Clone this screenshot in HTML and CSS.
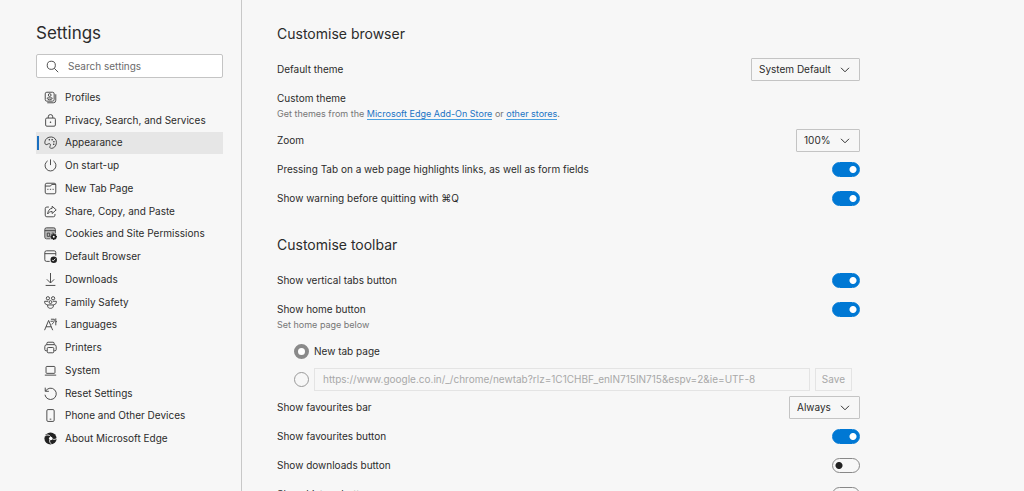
FILE: index.html
```html
<!DOCTYPE html>
<html lang="en-GB">
<head>
    <meta charset="UTF-8">
    <meta name="viewport" content="width=device-width, initial-scale=1.0">
    <title>Settings</title>
    <link rel="stylesheet" href="styles.css">
</head>
<body>
    <div class="layout">
        <aside class="sidebar">
            <h1>Settings</h1>
            <div class="search">
                <svg class="icon" viewBox="0 0 16 16"><circle cx="6.5" cy="6.5" r="5"/><path d="M10.2 10.2 15 15"/></svg>
                <input type="search" placeholder="Search settings" aria-label="Search settings">
            </div>

            <nav class="nav">
                <a href="#profiles">
                    <svg class="icon" viewBox="0 0 16 16"><rect x="1.5" y="1.5" width="11" height="11" rx="2"/><path d="M4 14.5h7.500a3 3 0 0 0 3-3V4"/><circle cx="7" cy="5" r="1.700"/><path d="M4 8.500h6v.7c0 2.200-6 2.200-6 0z"/></svg>
                    Profiles
                </a>
                <a href="#privacy">
                    <svg class="icon" viewBox="0 0 16 16"><rect x="2" y="5" width="12" height="10" rx="1.500"/><path d="M5.200 5V3.500a2.800 2.800 0 0 1 5.600 0V5"/><circle class="solid" cx="8" cy="10" r=".9"/></svg>
                    Privacy, Search, and Services
                </a>
                <a href="#appearance" class="active" aria-current="page">
                    <svg class="icon" viewBox="0 0 16 16"><path d="M1 7.500C1.300 3.500 5 1 9 1.200c4 .2 6.500 3.500 6.300 7-.2 4.300-3.300 7-6 7-2.500 0-2.500-1.600-1.600-3.200.9-1.700-.5-3.300-2.300-2.400L3.600 10.500C2 11.300.8 9.500 1 7.500z"/><circle class="solid" cx="6.500" cy="4.700" r=".9"/><circle class="solid" cx="10" cy="4.500" r=".9"/><circle class="solid" cx="12.200" cy="7" r=".9"/><circle class="solid" cx="12" cy="10.200" r=".9"/></svg>
                    Appearance
                </a>
                <a href="#startup">
                    <svg class="icon" viewBox="0 0 16 16"><path d="M8 .5v7M4.500 2.300a6.700 6.700 0 1 0 7 0"/></svg>
                    On start-up
                </a>
                <a href="#newtab">
                    <svg class="icon" viewBox="0 0 16 16"><rect x="1.500" y="1.500" width="13" height="13" rx="2"/><path d="M1.500 5H8l1.500-2h5M4 9h1.500M7.200 9h1.600M10.500 9H12"/></svg>
                    New Tab Page
                </a>
                <a href="#share">
                    <svg class="icon" viewBox="0 0 16 16"><path d="M6 2.500H3.500a2 2 0 0 0-2 2v8a2 2 0 0 0 2 2h8a2 2 0 0 0 2-2V11M10 1.500 15 6l-5 4.500V8C7.500 8 5.800 9 4.500 11 4.800 7.500 6.500 4.500 10 4z"/></svg>
                    Share, Copy, and Paste
                </a>
                <a href="#cookies">
                    <svg class="icon" viewBox="0 0 16 16"><path class="shade" d="M1.500 1.500h12v12h-12z"/><path d="M8 14.500H3a2 2 0 0 1-2-2V3a2 2 0 0 1 2-2h9a2 2 0 0 1 2 2v5M1 4.500h13M4 7.500h3v4H4zM9.500 7.500H12"/><circle class="solid" cx="12" cy="12" r="3.200"/><path class="cog" d="M12 8v8M8 12h8M9.200 9.200l5.600 5.600M14.800 9.200l-5.600 5.600"/><circle class="hole" cx="12" cy="12" r="1.200"/></svg>
                    Cookies and Site Permissions
                </a>
                <a href="#default">
                    <svg class="icon" viewBox="0 0 16 16"><path d="M7 14H3a2 2 0 0 1-2-2V3a2 2 0 0 1 2-2h9.500a2 2 0 0 1 2 2v4M1 4.500h13.500"/><circle class="solid" cx="12" cy="12" r="4"/><path class="tick" d="m10 12.300 1.300 1.200 2.700-2.900"/></svg>
                    Default Browser
                </a>
                <a href="#downloads">
                    <svg class="icon" viewBox="0 0 16 16"><path d="M8 0v12M3.500 7.800 8 12.300l4.500-4.500M2 15.300h12"/></svg>
                    Downloads
                </a>
                <a href="#family">
                    <svg class="icon" viewBox="0 0 16 16"><circle cx="4.800" cy="2.800" r="2"/><circle cx="11.200" cy="2.800" r="2"/><circle cx="8" cy="7.500" r="1.800"/><path d="M4.500 11H11.500v1.500c0 3.600-7 3.600-7 0zM5 6.500H.8c-.3 2.700 1 4.200 3.500 4.200M11 6.500h4.200c.3 2.700-1 4.200-3.500 4.200"/></svg>
                    Family Safety
                </a>
                <a href="#languages">
                    <svg class="icon" viewBox="0 0 16 16"><path d="M.7 15 5.700 3l5 12M2.500 10.800h6.400M8.500 1.500h4.200c0 3-1 5-3.200 6.300M8 4h3M14.500.5V9M14.500 4.500H16"/></svg>
                    Languages
                </a>
                <a href="#printers">
                    <svg class="icon" viewBox="0 0 16 16"><path d="M3.500 12H2.500A1.500 1.500 0 0 1 1 10.500V7a2.500 2.500 0 0 1 2.500-2.500h9A2.500 2.500 0 0 1 15 7v3.500a1.500 1.500 0 0 1-1.500 1.500h-1M3.500 4.500V3a1.500 1.500 0 0 1 1.500-1.500h6A1.500 1.500 0 0 1 12.500 3v1.500"/><rect x="4" y="8" width="8" height="6.500" rx="1.200"/></svg>
                    Printers
                </a>
                <a href="#system">
                    <svg class="icon" viewBox="0 0 16 16"><rect x="2.500" y="3" width="11" height="8.500" rx="1"/><path d="M1 13.700h14"/></svg>
                    System
                </a>
                <a href="#reset">
                    <svg class="icon" viewBox="0 0 16 16"><path d="M1.500.8v4.500H6M2 5a7 7 0 1 1-.8 4.500"/></svg>
                    Reset Settings
                </a>
                <a href="#phone">
                    <svg class="icon" viewBox="0 0 16 16"><rect x="3.500" y=".7" width="9" height="14.600" rx="1.500"/><path d="M7 12.500h2"/></svg>
                    Phone and Other Devices
                </a>
                <a href="#about">
                    <svg class="icon" viewBox="0 0 16 16"><circle class="solid" cx="8" cy="8" r="7.500"/><circle class="hole" cx="8.300" cy="8" r="2.200"/><path class="swirl" d="M8.300 5.800C6.500 3.200 3.500 3 1 5M10.300 8.500c2 1.200 4 .6 5.500-.8M7 9.800c-.5 2 .5 4 2.500 5.500"/></svg>
                    About Microsoft Edge
                </a>
            </nav>
        </aside>

        <main class="content">
            <section>
                <h2>Customise browser</h2>
                <div class="row">
                    <label for="theme">Default theme</label>
                    <div class="select">
                        <select id="theme"><option>System Default</option></select>
                        <svg class="chevron" viewBox="0 0 10 6"><path d="m1 .8 4 4 4-4"/></svg>
                    </div>
                </div>
                <div class="row with-note">
                    <div>
                        <div>Custom theme</div>
                        <p class="note">Get themes from the <a href="#store">Microsoft Edge Add-On Store</a> or <a href="#stores">other stores</a>.</p>
                    </div>
                </div>
                <div class="row">
                    <label for="zoom">Zoom</label>
                    <div class="select">
                        <select id="zoom"><option>100%</option></select>
                        <svg class="chevron" viewBox="0 0 10 6"><path d="m1 .8 4 4 4-4"/></svg>
                    </div>
                </div>
                <div class="row">
                    <label for="tabFocus">Pressing Tab on a web page highlights links, as well as form fields</label>
                    <input type="checkbox" class="toggle" id="tabFocus" checked>
                </div>
                <div class="row">
                    <label for="quitWarning">Show warning before quitting with ⌘Q</label>
                    <input type="checkbox" class="toggle" id="quitWarning" checked>
                </div>
            </section>

            <section>
                <h2>Customise toolbar</h2>
                <div class="row">
                    <label for="verticalTabs">Show vertical tabs button</label>
                    <input type="checkbox" class="toggle" id="verticalTabs" checked>
                </div>
                <div class="row with-note">
                    <div>
                        <label for="homeButton">Show home button</label>
                        <p class="note">Set home page below</p>
                    </div>
                    <input type="checkbox" class="toggle" id="homeButton" checked>
                </div>
                <div class="option">
                    <input type="radio" name="home" id="homeNewTab" checked>
                    <label for="homeNewTab">New tab page</label>
                </div>
                <div class="option">
                    <input type="radio" name="home" aria-label="Custom home page">
                    <input type="text" class="url" aria-label="Home page address" value="https://www.google.co.in/_/chrome/newtab?rlz=1C1CHBF_enIN715IN715&amp;espv=2&amp;ie=UTF-8" disabled>
                    <button class="save" disabled>Save</button>
                </div>
                <div class="row">
                    <label for="favBar">Show favourites bar</label>
                    <div class="select">
                        <select id="favBar"><option>Always</option></select>
                        <svg class="chevron" viewBox="0 0 10 6"><path d="m1 .8 4 4 4-4"/></svg>
                    </div>
                </div>
                <div class="row">
                    <label for="favButton">Show favourites button</label>
                    <input type="checkbox" class="toggle" id="favButton" checked>
                </div>
                <div class="row">
                    <label for="downloadsButton">Show downloads button</label>
                    <input type="checkbox" class="toggle" id="downloadsButton">
                </div>
                <div class="row">
                    <label for="historyButton">Show history button</label>
                    <input type="checkbox" class="toggle" id="historyButton">
                </div>
            </section>
        </main>
    </div>
</body>
</html>
```
FILE: styles.css
```css
:root {
    --bg-color: #f7f7f7;
    --text-color: #2b2b2b;
    --muted-color: #767676;
    --border-color: #c4c4c4;
    --accent-color: #0078d4;
}

* {
    box-sizing: border-box;
}

body {
    margin: 0;
    background-color: var(--bg-color);
    color: var(--text-color);
    font-family: Inter, "DejaVu Sans", sans-serif;
    font-size: 10px;
    line-height: 15px;
}

input,
select,
button {
    margin: 0;
    font: inherit;
    color: inherit;
}

.layout {
    display: flex;
    height: 100vh;
    overflow: hidden;
}

/* Sidebar */
.sidebar {
    flex: none;
    width: 242px;
    padding: 22px 18px 0 36px;
    border-right: 1px solid #c8c8c8;
}

h1 {
    margin: 0 0 10px;
    font-size: 17px;
    font-weight: 400;
    line-height: 22px;
}

.search {
    display: flex;
    align-items: center;
    gap: 9px;
    height: 24px;
    padding: 0 9px;
    background-color: #fff;
    border: 1px solid var(--border-color);
    border-radius: 2px;
}

.search input {
    flex: 1;
    min-width: 0;
    padding: 0;
    border: none;
    outline: none;
    background: none;
}

.search input::placeholder {
    color: #6b6b6b;
}

.nav {
    display: grid;
    grid-auto-rows: 1fr;
    min-height: 364px;
    margin-top: 8px;
}

.nav a {
    position: relative;
    display: flex;
    align-items: center;
    gap: 8px;
    padding-left: 8px;
    color: inherit;
    text-decoration: none;
}

.nav a.active {
    background-color: #e6e6e6;
}

.nav a.active::before {
    content: "";
    position: absolute;
    left: 1px;
    top: 4px;
    bottom: 4px;
    width: 2px;
    background-color: #1a6fc0;
}

.icon {
    flex: none;
    width: 13px;
    height: 13px;
    fill: none;
    stroke: #3a3a3a;
    stroke-width: 1.1;
}

.icon .solid {
    fill: #222;
    stroke: none;
}

.icon .shade {
    fill: #bbb;
    stroke: none;
}

.icon .cog {
    stroke: #222;
    stroke-width: 1.6;
}

.icon .hole {
    fill: #fff;
    stroke: none;
}

.icon .tick,
.icon .swirl {
    stroke: var(--bg-color);
}

/* Content */
.content {
    flex: 1;
    max-width: 618px;
    padding: 23px 0 0 35px;
}

h2 {
    margin: 0 0 10px;
    font-size: 14px;
    font-weight: 400;
    line-height: 22px;
}

section + section {
    margin-top: 21px;
}

.row {
    display: flex;
    align-items: center;
    justify-content: space-between;
    min-height: 29px;
}

.row.with-note {
    align-items: flex-start;
    padding: 7px 0 5px;
}

.note {
    margin: 0;
    font-size: 9px;
    color: var(--muted-color);
}

.note a {
    color: #1a73c4;
    text-decoration: none;
    border-bottom: 1px solid #4ba0e0;
}

.select {
    position: relative;
}

.select select {
    display: block;
    height: 23px;
    padding: 0 28px 0 7px;
    appearance: none;
    background: none;
    border: 1px solid var(--border-color);
    border-radius: 1px;
}

.chevron {
    position: absolute;
    right: 10px;
    top: 9px;
    width: 10px;
    height: 6px;
    fill: none;
    stroke: #333;
    pointer-events: none;
}

.toggle {
    flex: none;
    width: 28px;
    height: 15px;
    appearance: none;
    border: 1px solid #888;
    border-radius: 8px;
    background: radial-gradient(circle at 6px 50%, #222 3px, transparent 4px);
}

.toggle:checked {
    border-color: var(--accent-color);
    background: radial-gradient(circle at 20px 50%, #fff 3px, var(--accent-color) 4px);
}

.option {
    display: flex;
    align-items: center;
    gap: 5px;
    min-height: 28px;
    padding: 0 8px 0 17px;
}

.option input[type="radio"] {
    flex: none;
    width: 15px;
    height: 15px;
    appearance: none;
    border: 1px solid #999;
    border-radius: 50%;
}

.option input[type="radio"]:checked {
    border: 4px solid #8a8a8a;
    background-color: #fff;
}

.url {
    flex: 1;
    min-width: 0;
}

.url,
.save {
    height: 23px;
    padding: 0 8px;
    color: #a8a8a8;
    background: none;
    border: 1px solid #e4e4e4;
}

.save {
    padding: 0 6px;
}
```
